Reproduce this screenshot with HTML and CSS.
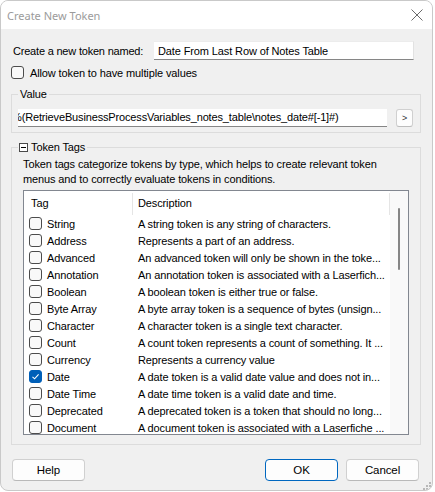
FILE: index.html
```html
<!DOCTYPE html>
<html>
<head>
<meta charset="utf-8">
<link rel="stylesheet" href="styles.css">
</head>
<body>
<div class="window">
  <div class="titlebar">
    <span class="title">Create New Token</span>
    <svg class="close" width="12" height="12" viewBox="0 0 12 12"><path d="M0.5 0.5L11.5 11.5M11.5 0.5L0.5 11.5" stroke="#6a6a6a" stroke-width="1" fill="none"/></svg>
  </div>
  <div class="content">
    <div class="name-row">
      <span class="name-label">Create a new token named:</span>
      <div class="textbox name-box">Date From Last Row of Notes Table</div>
    </div>
    <div class="check-row">
      <span class="cb"></span><span class="check-label">Allow token to have multiple values</span>
    </div>
    <fieldset class="group value-group">
      <legend>Value</legend>
      <div class="value-row">
        <div class="textbox value-box"><span class="value-text">%(RetrieveBusinessProcessVariables_notes_table\notes_date#[-1]#)</span></div>
        <div class="mini-btn">&gt;</div>
      </div>
    </fieldset>
    <fieldset class="group tags-group">
      <legend class="tags-legend"><svg class="collapse" width="9" height="9" viewBox="0 0 9 9"><rect x="0.5" y="0.5" width="8" height="8" fill="#fff" stroke="#4a4a4a"/><path d="M2 4.5H7" stroke="#000" stroke-width="1"/></svg><span>Token Tags</span></legend>
      <div class="tags-body">
        <p class="desc">Token tags categorize tokens by type, which helps to create relevant token<br>menus and to correctly evaluate tokens in conditions.</p>
        <div class="list">
          <div class="list-main">
            <div class="list-head">
              <div class="col-tag head-tag">Tag</div>
              <div class="col-desc head-desc">Description</div>
            </div>
            <div class="row"><div class="col-tag"><span class="cb"></span>String</div><div class="col-desc">A string token is any string of characters.</div></div>
            <div class="row"><div class="col-tag"><span class="cb"></span>Address</div><div class="col-desc">Represents a part of an address.</div></div>
            <div class="row"><div class="col-tag"><span class="cb"></span>Advanced</div><div class="col-desc">An advanced token will only be shown in the toke...</div></div>
            <div class="row"><div class="col-tag"><span class="cb"></span>Annotation</div><div class="col-desc">An annotation token is associated with a Laserfich...</div></div>
            <div class="row"><div class="col-tag"><span class="cb"></span>Boolean</div><div class="col-desc">A boolean token is either true or false.</div></div>
            <div class="row"><div class="col-tag"><span class="cb"></span>Byte Array</div><div class="col-desc">A byte array token is a sequence of bytes (unsign...</div></div>
            <div class="row"><div class="col-tag"><span class="cb"></span>Character</div><div class="col-desc">A character token is a single text character.</div></div>
            <div class="row"><div class="col-tag"><span class="cb"></span>Count</div><div class="col-desc">A count token represents a count of something. It ...</div></div>
            <div class="row"><div class="col-tag"><span class="cb"></span>Currency</div><div class="col-desc">Represents a currency value</div></div>
            <div class="row"><div class="col-tag"><span class="cb checked"><svg width="13" height="13" viewBox="0 0 13 13"><path d="M3.5 6.8L5.6 8.8L9.6 4.4" stroke="#fff" stroke-width="1.1" fill="none"/></svg></span>Date</div><div class="col-desc">A date token is a valid date value and does not in...</div></div>
            <div class="row"><div class="col-tag"><span class="cb"></span>Date Time</div><div class="col-desc">A date time token is a valid date and time.</div></div>
            <div class="row"><div class="col-tag"><span class="cb"></span>Deprecated</div><div class="col-desc">A deprecated token is a token that should no long...</div></div>
            <div class="row"><div class="col-tag"><span class="cb"></span>Document</div><div class="col-desc">A document token is associated with a Laserfiche ...</div></div>
          </div>
          <div class="scroll"><div class="thumb"></div></div>
        </div>
      </div>
    </fieldset>
    <div class="buttons">
      <div class="btn">Help</div>
      <div class="spacer"></div>
      <div class="btn default">OK</div>
      <div class="btn">Cancel</div>
    </div>
  </div>
  <svg class="grip" width="9" height="9" viewBox="0 0 9 9" fill="#b8b8b8"><rect x="7" y="1" width="2" height="2"/><rect x="4" y="4" width="2" height="2"/><rect x="7" y="4" width="2" height="2"/><rect x="1" y="7" width="2" height="2"/><rect x="4" y="7" width="2" height="2"/><rect x="7" y="7" width="2" height="2"/></svg>
</div>
</body>
</html>
```
FILE: styles.css
```css
* { box-sizing: border-box; }
html, body { margin: 0; padding: 0; background: #ffffff; }
body {
  font-family: "Liberation Sans", Arial, sans-serif;
  font-size: 11px;
  color: #000;
  letter-spacing: -0.12px;
}
.window {
  position: relative;
  width: 433px;
  height: 491px;
  background: #f0f0f0;
  border: 1px solid #c9c9c9;
  border-radius: 8px;
  overflow: hidden;
  display: flex;
  flex-direction: column;
}
.titlebar {
  height: 28px;
  flex: none;
  background: #ffffff;
  display: flex;
  align-items: center;
  justify-content: space-between;
  padding: 0 9px 0 6px;
}
.title {
  font-family: "Noto Sans", "Open Sans", sans-serif;
  font-size: 11px;
  letter-spacing: 0;
  color: #9b9b9b;
}
.close { display: block; margin-top: -1px; }
.content {
  flex: 1;
  display: flex;
  flex-direction: column;
  padding: 0 11px 0 10px;
}
.name-label { letter-spacing: -0.2px; }
.name-row {
  margin-top: 12px;
  height: 19px;
  display: flex;
  align-items: center;
  justify-content: space-between;
  padding: 0 7px 0 2px;
}
.textbox {
  background: #ffffff;
  border-bottom: 1px solid #868686;
  display: flex;
  align-items: center;
  white-space: nowrap;
  overflow: hidden;
}
.name-box {
  width: 260px;
  height: 19px;
  padding-left: 4px;
  border-top: 1px solid #ececec;
  border-right: 1px solid #e2e2e2;
}
.check-row {
  margin-top: 6px;
  height: 13px;
  display: flex;
  align-items: center;
}
.check-label { margin-left: 6px; }
.cb {
  flex: none;
  display: inline-block;
  width: 13px;
  height: 13px;
  border: 1px solid #4c4c4c;
  border-radius: 3px;
  background: #f9f9f9;
}
.cb.checked {
  background: #005fb8;
  border-color: #005fb8;
}
.cb.checked svg { display: block; margin: -1px 0 0 -1px; }
.group {
  margin: 0;
  border: 1px solid #dcdcdc;
  padding: 0 7px 5px 6px;
  min-width: 0;
}
.group legend {
  padding: 0 2px;
  line-height: 13px;
  height: 13px;
}
.value-group { margin-top: 9px; }
.value-row {
  margin-top: 7px;
  display: flex;
  align-items: center;
  gap: 9px;
}
.value-box {
  flex: 1;
  height: 18px;
}
.value-text { margin-left: -6px; letter-spacing: -0.15px; }
.mini-btn {
  width: 17px;
  height: 18px;
  background: #fdfdfd;
  border: 1px solid #d0d0d0;
  border-bottom-color: #bcbcbc;
  border-radius: 3px;
  font-size: 9px;
  display: flex;
  align-items: center;
  justify-content: center;
  color: #333;
  margin-top: 1px;
}
.tags-group { margin-top: 8px; padding-bottom: 9px; }
.tags-legend {
  display: flex;
  align-items: center;
  gap: 3px;
}
.collapse { display: block; margin-left: -1px; }
.tags-body { margin-left: 5px; }
.desc {
  margin: 3px 0 0 0;
  line-height: 15px;
}
.list {
  margin-top: 3px;
  width: 386px;
  height: 245px;
  border: 1px solid #828790;
  background: #ffffff;
  display: flex;
  overflow: hidden;
}
.list-main {
  width: 366px;
  flex: none;
  overflow: hidden;
}
.list-head {
  height: 24px;
  display: flex;
  align-items: stretch;
}
.col-tag {
  width: 109px;
  flex: none;
  display: flex;
  align-items: center;
  white-space: nowrap;
}
.col-desc {
  flex: 1;
  min-width: 0;
  padding-left: 5px;
  display: flex;
  align-items: center;
  white-space: nowrap;
  overflow: hidden;
}
.head-tag {
  padding-left: 7px;
  border-right: 1px solid #e5e5e5;
  margin-top: 2px;
  padding-bottom: 2px;
}
.head-desc {
  border-right: 1px solid #e5e5e5;
  margin-top: 2px;
  padding-bottom: 2px;
}
.row {
  height: 17px;
  display: flex;
}
.row .col-tag { padding-left: 5px; }
.row .cb { margin-right: 5px; }
.scroll {
  flex: 1;
  background: #f9f9f9;
  padding-top: 17px;
}
.thumb {
  width: 2px;
  height: 62px;
  margin-left: 8px;
  background: #858585;
  border-radius: 1px;
}
.buttons {
  margin-top: 14px;
  display: flex;
  gap: 8px;
  padding: 0 2px 0 1px;
}
.spacer { flex: 1; }
.btn {
  width: 73px;
  height: 22px;
  background: #fdfdfd;
  border: 1px solid #d0d0d0;
  border-bottom-color: #b9b9b9;
  border-radius: 4px;
  display: flex;
  align-items: center;
  justify-content: center;
  font-size: 11.5px;
  letter-spacing: -0.1px;
}
.btn.default {
  border: 1px solid #0067c0;
}
.grip {
  position: absolute;
  right: 1px;
  bottom: 0px;
}
```
